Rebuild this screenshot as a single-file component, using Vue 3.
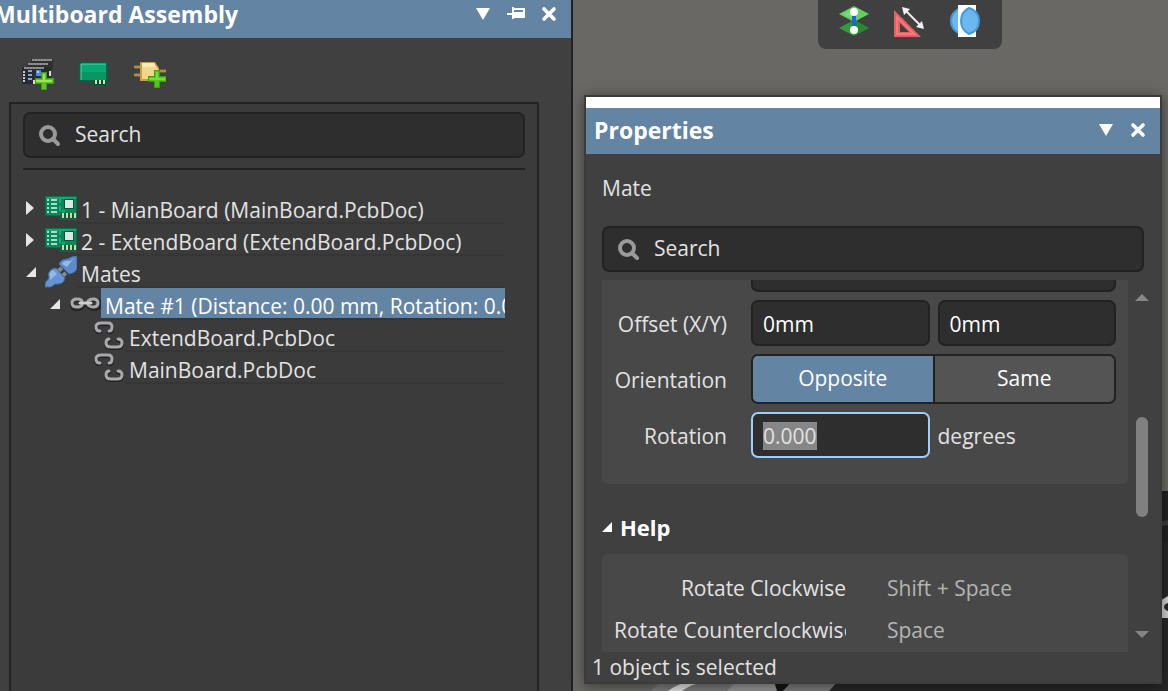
<script setup>
import { ref, onMounted } from 'vue'

const tree = [
  { id: 1, level: 0, state: 'closed', icon: 'board', label: '1 - MianBoard (MainBoard.PcbDoc)' },
  { id: 2, level: 0, state: 'closed', icon: 'board', label: '2 - ExtendBoard (ExtendBoard.PcbDoc)' },
  { id: 3, level: 0, state: 'open', icon: 'plug', label: 'Mates' },
  { id: 4, level: 1, state: 'open', icon: 'chain', label: 'Mate #1 (Distance: 0.00 mm, Rotation: 0.000)', selected: true },
  { id: 5, level: 2, state: 'leaf', icon: 'link', label: 'ExtendBoard.PcbDoc' },
  { id: 6, level: 2, state: 'leaf', icon: 'link', label: 'MainBoard.PcbDoc' }
]

const shortcuts = [
  { action: 'Rotate Clockwise', keys: 'Shift + Space' },
  { action: 'Rotate Counterclockwise', keys: 'Space' }
]

const assemblyQuery = ref('')
const propertyQuery = ref('')
const offsetX = ref('0mm')
const offsetY = ref('0mm')
const rotation = ref('0.000')
const orientation = ref('Opposite')
const rotationField = ref(null)

onMounted(() => {
  rotationField.value.focus({ preventScroll: true })
  rotationField.value.select()
})
</script>

<template>
  <div class="workspace">
    <aside class="dock">
      <header class="titlebar docked">
        <h2>Multiboard Assembly</h2>
        <button type="button" aria-label="Panel menu">
          <svg width="16" height="16" viewBox="0 0 16 16"><path d="M1 2h14L8 14z" fill="#fff" /></svg>
        </button>
        <button type="button" aria-label="Pin panel">
          <svg width="18" height="16" viewBox="0 0 18 16"><path d="M0 7h5V1h2v1h11v10H7v1H5V9H0zM7 4v2h9V4z" fill="#fff" fill-rule="evenodd" /></svg>
        </button>
        <button type="button" aria-label="Close panel">
          <svg width="16" height="16" viewBox="0 0 16 16"><path d="M3 3l10 10M13 3L3 13" stroke="#fff" stroke-width="3.6" stroke-linecap="round" /></svg>
        </button>
      </header>

      <div class="tools">
        <button type="button" aria-label="Add multiboard project">
          <svg width="32" height="32" viewBox="0 0 32 32">
            <path d="M9 1h22v11H9z" fill="#303030" />
            <path d="M5 5h22v9H5z" fill="#303030" />
            <path d="M0 9h29v17H0z" fill="#282b2f" />
            <path d="M10 2h20M6 6h20M2 10h20" stroke="#7d7d7d" stroke-width="2" />
            <path d="M10 2h20M6 6h20M2 10h20" stroke="#a5a5a5" stroke-width="1" stroke-dasharray="2 1" />
            <path d="M2 13v11" stroke="#c5ccd4" stroke-width="2" stroke-dasharray="2 1" />
            <path d="M6 13h4M6 17h4M6 21h4" stroke="#86a7d8" stroke-width="2" />
            <path d="M14 12h5v6h-5z" fill="#4b86f4" />
            <path d="M15 13h2v2h-2z" fill="#b5d0ff" />
            <path d="M28 13v5M12 22v4" stroke="#d8d8d8" stroke-width="2" />
            <path d="M19 14h6v6h7v6h-7v6h-6v-6h-6v-6h6z" fill="#3c9c12" />
            <path d="M20 15h4v6h7v4h-7v6h-4v-6h-6v-4h6z" fill="#62c22a" />
            <path d="M21 16h2v6h7v2H14v-2h7z" fill="#9be857" />
          </svg>
        </button>
        <button type="button" aria-label="Add board">
          <svg width="32" height="32" viewBox="0 0 32 32">
            <path d="M1 4h29v24H15v-4H1z" fill="#046246" />
            <path d="M3 6h25v16H3z" fill="#08a875" />
            <path d="M3 14h25v8H3z" fill="#079763" />
            <path d="M3 22V6h25" fill="none" stroke="#53d4ad" />
            <path d="M16 22h12v5H16z" fill="#064a35" />
            <path d="M17 22h2v4h-2zM21 22h2v4h-2zM25 22h2v4h-2z" fill="#d9dfa6" />
          </svg>
        </button>
        <button type="button" aria-label="Add component">
          <svg width="32" height="32" viewBox="0 0 32 32">
            <path d="M0 9h7M0 17h7M22 13h10" stroke="#9b7936" stroke-width="3" />
            <path d="M0 9h7M0 17h7M23 13h9" stroke="#c8a45c" />
            <path d="M6 4h15l4 6v13H6z" fill="#c89d48" />
            <path d="M8 5h12l4 6v10H8z" fill="#f2d68a" />
            <path d="M8 5h12l2 4H8z" fill="#f9ebb9" />
            <path d="M20 12h6v6h6v6h-6v6h-6v-6h-6v-6h6z" fill="#3c9c12" />
            <path d="M21 13h4v6h7v4h-7v6h-4v-6h-6v-4h6z" fill="#58c51d" />
            <path d="M22 14h2v6h7v2H15v-2h7z" fill="#79da3b" />
          </svg>
        </button>
      </div>

      <section class="assembly">
        <label class="search">
          <svg width="24" height="24" viewBox="0 0 24 24"><circle cx="11" cy="11" r="7" fill="none" stroke="#9a9a9a" stroke-width="4" /><path d="M16 16l5 5" stroke="#9a9a9a" stroke-width="4" stroke-linecap="round" /></svg>
          <input v-model="assemblyQuery" type="text" placeholder="Search" aria-label="Search assembly" />
        </label>
        <ul class="tree">
          <li v-for="node in tree" :key="node.id" :class="['node', 'level-' + node.level, { selected: node.selected }]">
            <span class="toggle">
              <svg v-if="node.state === 'closed'" width="16" height="32" viewBox="0 0 16 32"><path d="M3 9l8 7-8 7z" fill="#e6e6e6" /></svg>
              <svg v-else-if="node.state === 'open'" width="16" height="32" viewBox="0 0 16 32"><path d="M13 11v10H3z" fill="#e6e6e6" /></svg>
            </span>
            <svg v-if="node.icon === 'board'" width="32" height="32" viewBox="0 0 32 32">
              <path d="M0 4h32v24H15v-4H0z" fill="#04714e" />
              <path d="M1 5h30v18H1z" fill="#07895b" />
              <path d="M1 6h30" stroke="#3eb78d" />
              <path d="M2 8h2M2 12h2M2 16h2M2 20h2M6 8h6M6 12h6M6 16h6M6 20h6" stroke="#a8dcc4" stroke-width="2" />
              <path d="M15 7v4M15 14v5M17 19h3" stroke="#22a978" stroke-width="2" />
              <path d="M19 7h10v10H19z" fill="#07553d" />
              <path d="M20 8h8v8h-8z" fill="#d9e8e1" />
              <path d="M16 21h15v6H16z" fill="#065c40" />
              <path d="M17 21h2v5h-2zM21 21h2v5h-2zM25 21h2v5h-2zM29 21h2v5h-2z" fill="#d3d89c" />
            </svg>
            <svg v-else-if="node.icon === 'plug'" width="32" height="32" viewBox="0 0 32 32">
              <path d="M12 16l5-4M16 21l5-4" stroke="#8a8a8a" stroke-width="4" />
              <path d="M0 31V27L4 22Q2 16 7 13L11 12 20 22Q19 29 10 28L6 31Z" fill="#6494d2" stroke="#3b69a7" />
              <path d="M5 21Q3 17 8 14l4 4-7 6z" fill="#94b9e8" />
              <path d="M32 0v12Q31 17 24 18L14 8Q16 3 22 3L29 0z" fill="#5c8ccc" stroke="#3b69a7" />
              <path d="M17 8Q19 4 25 5l4-3-7 9z" fill="#94b9e8" />
            </svg>
            <svg v-else-if="node.icon === 'chain'" width="32" height="32" viewBox="0 0 32 32">
              <g fill="none" stroke-linecap="round">
                <path d="M13 18Q12 20 8 20Q3 20 3 16T8 11Q12 11 14 13M20 13Q22 11 26 11Q31 11 31 15T26 20Q22 20 20 18M11 16h12" stroke="#252525" stroke-width="4" transform="translate(0 1)" />
                <path d="M13 17Q12 19 8 19Q3 19 3 15T8 11Q12 11 13 13M19 13Q21 11 24 11Q29 11 29 15T24 19Q21 19 19 17" stroke="#aaa" stroke-width="3" />
                <path d="M11 15h11" stroke="#d0d0d0" stroke-width="3" />
              </g>
            </svg>
            <svg v-else width="32" height="32" viewBox="0 0 32 32">
              <g fill="none" stroke-linecap="round">
                <path d="M7 11Q3 11 3 7T8 3h7Q19 3 19 7T16 11M16 19Q13 19 13 23T18 27h6Q29 27 29 23T25 19" stroke="#222" stroke-width="4" transform="translate(0 1)" />
                <path d="M7 11Q3 11 3 7T8 3h7Q19 3 19 7T16 11M16 19Q13 19 13 23T18 27h6Q29 27 29 23T25 19" stroke="#a9a9ad" stroke-width="3" />
              </g>
            </svg>
            <span class="name">{{ node.label }}</span>
          </li>
        </ul>
      </section>
    </aside>

    <main class="canvas">
      <svg class="scene" width="595" height="210" viewBox="0 0 595 210" aria-hidden="true">
        <path d="M78 210l13-12h180l-11 12z" fill="#797979" />
        <path d="M95 210Q112 197 145 197L131 201Q118 203 109 210z" fill="#dedede" />
        <path d="M154 210l12-13h47l-9 13z" fill="#929292" />
        <path d="M201 200h18l-9 10h-6z" fill="#16150f" />
        <path d="M256 210l12-13h310V10h17v200z" fill="#272727" />
        <path d="M585 10h10v50h-10z" fill="#202020" />
        <path d="M585 41l10-2v5l-10 2z" fill="#3b3b3b" />
        <path d="M585 121l10-6v22h-10z" fill="#cfcfcf" />
        <ellipse cx="596" cy="126" rx="5" ry="4" fill="#282828" />
      </svg>

      <nav class="floatbar" aria-label="Mate tools">
        <button type="button" aria-label="Create mate">
          <svg width="32" height="32" viewBox="0 0 32 32">
            <path d="M1 23l15-8 15 8-15 8z" fill="#329a37" />
            <path d="M16 15l15 8-15 8z" fill="#248a2b" />
            <path d="M1 9l15-8 15 8-15 8z" fill="#63cf60" />
            <path d="M5 9l11-6v12z" fill="#79da75" />
            <path d="M16 7v18" stroke="#1c66d5" stroke-width="4" />
            <circle cx="16" cy="7" r="4" fill="#fff" /><circle cx="16" cy="25" r="4" fill="#fff" />
          </svg>
        </button>
        <button type="button" aria-label="Measure">
          <svg width="32" height="32" viewBox="0 0 32 32">
            <path d="M0 5v27h27zM6 18v9h9z" fill="#e06264" fill-rule="evenodd" />
            <path d="M3 12v17h17z" fill="none" stroke="#f87777" stroke-width="2" />
            <path d="M11 5l16 16" stroke="#ececec" stroke-width="2" />
            <path d="M8 2l8 2-6 6zM30 24l-8-2 6-6z" fill="#f2f2f2" />
          </svg>
        </button>
        <button type="button" aria-label="Section view">
          <svg width="32" height="33" viewBox="0 0 32 33">
            <circle cx="14" cy="17" r="13" fill="#6bb7f0" stroke="#4798d4" stroke-width="2" />
            <path d="M8 1h18v32H8z" fill="#fff" />
            <path d="M19 4Q29 7 29 17T19 30Q11 26 11 17T19 4z" fill="#6bb7f0" stroke="#4798d4" stroke-width="2" />
          </svg>
        </button>
      </nav>

      <section class="properties">
        <div class="strip"></div>
        <header class="titlebar">
          <h2>Properties</h2>
          <button type="button" aria-label="Properties menu">
            <svg width="16" height="16" viewBox="0 0 16 16"><path d="M1 2h14L8 14z" fill="#fff" /></svg>
          </button>
          <button type="button" aria-label="Close properties">
            <svg width="16" height="16" viewBox="0 0 16 16"><path d="M3 3l10 10M13 3L3 13" stroke="#fff" stroke-width="3.6" stroke-linecap="round" /></svg>
          </button>
        </header>
        <h3 class="subject">Mate</h3>
        <label class="search">
          <svg width="24" height="24" viewBox="0 0 24 24"><circle cx="11" cy="11" r="7" fill="none" stroke="#9a9a9a" stroke-width="4" /><path d="M16 16l5 5" stroke="#9a9a9a" stroke-width="4" stroke-linecap="round" /></svg>
          <input v-model="propertyQuery" type="text" placeholder="Search" aria-label="Search properties" />
        </label>

        <div class="scroller">
          <div class="content">
            <div class="group form">
              <div class="cut"></div>
              <label for="offset-x">Offset (X/Y)</label>
              <div class="pair">
                <input id="offset-x" v-model="offsetX" type="text" />
                <input v-model="offsetY" type="text" aria-label="Offset Y" />
              </div>
              <span id="orientation-label" class="caption">Orientation</span>
              <div class="segments" role="group" aria-labelledby="orientation-label">
                <button
                  v-for="side in ['Opposite', 'Same']"
                  :key="side"
                  type="button"
                  :class="{ active: orientation === side }"
                  :aria-pressed="orientation === side"
                  @click="orientation = side"
                >{{ side }}</button>
              </div>
              <label for="rotation">Rotation</label>
              <div class="pair">
                <input id="rotation" ref="rotationField" v-model="rotation" type="text" />
                <span class="unit">degrees</span>
              </div>
            </div>

            <h3 class="heading">
              <svg width="12" height="12" viewBox="0 0 12 12"><path d="M10 1v10H0z" fill="#fff" /></svg>
              Help
            </h3>
            <dl class="group help">
              <template v-for="item in shortcuts" :key="item.action">
                <dt>{{ item.action }}</dt>
                <dd>{{ item.keys }}</dd>
              </template>
            </dl>
          </div>
          <div class="scrollbar" aria-hidden="true">
            <svg width="14" height="8" viewBox="0 0 14 8"><path d="M7 0l7 7H0z" fill="#868686" /></svg>
            <span class="thumb"></span>
            <svg width="14" height="8" viewBox="0 0 14 8"><path d="M0 0h14L7 7z" fill="#868686" /></svg>
          </div>
        </div>
        <footer class="status">1 object is selected</footer>
      </section>
    </main>
  </div>
</template>

<style>
html,
body {
  overflow: hidden;
  background: #6a6865;
}
</style>

<style scoped>
.workspace {
  display: flex;
  height: 100vh;
  overflow: hidden;
  color: #e2e2e2;
  font-family: "Open Sans", "Noto Sans", sans-serif;
  font-size: 21px;
  line-height: 30px;
}

.workspace *,
.workspace *::before {
  box-sizing: border-box;
}

h2,
h3,
ul,
dl,
dd {
  margin: 0;
  padding: 0;
}

svg {
  display: block;
  flex: none;
}

button,
input {
  font: inherit;
  color: inherit;
}

button {
  padding: 0;
  border: 0;
  background: none;
}

.dock {
  display: flex;
  flex: 0 0 573px;
  flex-direction: column;
  min-width: 0;
  border-right: 2px solid #222;
  background: #404040;
}

.titlebar {
  display: flex;
  flex: none;
  align-items: center;
  gap: 16px;
  height: 46px;
  padding: 0 14px 2px 8px;
  background: #6484a4;
  color: #fff;
}

.titlebar h2 {
  flex: 1;
  font-size: 23px;
  font-weight: 700;
  white-space: nowrap;
}

.docked {
  height: 38px;
  padding: 0 14px 10px 0;
}

.docked h2 {
  margin-left: -6px;
}

.tools {
  display: flex;
  gap: 24px;
  padding: 20px 22px 12px;
}

.assembly {
  flex: 1;
  min-width: 0;
  margin: 0 32px 0 9px;
  padding: 8px 12px 0;
  border: 2px solid #222;
  border-bottom: 0;
  background: #3b3b3b;
}

.search {
  display: flex;
  align-items: center;
  gap: 14px;
  height: 46px;
  padding: 0 12px;
  border: 2px solid #222;
  border-radius: 7px;
  background: #2e2e2e;
}

.search input {
  flex: 1;
  min-width: 0;
  height: 30px;
  padding: 0 0 2px;
  border: 0;
  outline: 0;
  background: none;
}

.search input::placeholder {
  color: #e2e2e2;
  opacity: 1;
}

.tree {
  margin-top: 10px;
  padding: 22px 20px 0 0;
  border-top: 2px solid #222;
  list-style: none;
}

.node {
  display: flex;
  height: 32px;
}

.toggle {
  flex: 0 0 22px;
}

.level-1 {
  padding-left: 24px;
}

.level-2 {
  padding-left: 48px;
}

.name {
  flex: 1;
  min-width: 0;
  padding: 3px 0 0 4px;
  border-bottom: 2px solid #363636;
  overflow: hidden;
  white-space: nowrap;
}

.selected .name {
  background: #6484a4;
  color: #fff;
}

.canvas {
  position: relative;
  display: flex;
  flex: 1;
  flex-direction: column;
  min-width: 0;
  padding: 0 6px 7px 11px;
  background: #6a6865;
}

.scene {
  position: absolute;
  right: 0;
  bottom: 0;
}

.floatbar {
  display: flex;
  flex: none;
  align-self: flex-end;
  gap: 24px;
  height: 49px;
  margin: 0 160px 46px 0;
  padding: 4px 20px 12px;
  border-radius: 0 0 8px 8px;
  background: #404040;
}

.properties {
  position: relative;
  display: flex;
  flex: 1;
  flex-direction: column;
  min-height: 0;
  border: 2px solid #3c3c3c;
  background: #404040;
  box-shadow: 0 2px 12px rgba(0, 0, 0, 0.45);
}

.strip {
  flex: 0 0 11px;
  background: #fff;
}

.subject {
  margin: 19px 16px 23px;
  font-size: 21px;
  font-weight: 400;
}

.properties > .search {
  flex: none;
  margin: 0 16px 8px;
}

.scroller {
  display: flex;
  flex: 1;
  min-height: 0;
  padding: 0 11px 0 16px;
}

.content {
  flex: 1;
  min-width: 0;
  overflow: hidden;
}

.group {
  border-radius: 6px;
  background: #484848;
}

.form {
  display: grid;
  grid-template-columns: 113px 1fr;
  gap: 8px 24px;
  align-items: center;
  padding: 0 12px 26px;
  border-radius: 0 0 6px 6px;
}

.form label,
.caption {
  padding-top: 2px;
  text-align: right;
  white-space: nowrap;
}

.cut {
  grid-column: 2;
  height: 12px;
  border: 2px solid #222;
  border-top: 0;
  border-radius: 0 0 7px 7px;
  background: #2e2e2e;
}

.pair {
  display: grid;
  grid-template-columns: 1fr 1fr;
  gap: 8px;
  align-items: center;
}

.pair input {
  width: 100%;
  min-width: 0;
  height: 46px;
  padding: 2px 10px 0;
  border: 2px solid #222;
  border-radius: 7px;
  outline: 0;
  background: #2e2e2e;
  color: #fff;
}

.pair input:focus {
  border-color: #a0cdfb;
}

.pair input::selection {
  background: #868686;
  color: #e2e2e2;
}

.unit {
  padding-top: 2px;
}

.segments {
  display: flex;
  height: 50px;
  border: 2px solid #222;
  border-radius: 7px;
  background: #545454;
  overflow: hidden;
}

.segments button {
  flex: 1;
  padding-bottom: 2px;
  color: #fff;
}

.segments button + button {
  border-left: 2px solid #222;
}

.segments .active {
  background: #6484a4;
}

.heading {
  display: flex;
  align-items: center;
  gap: 6px;
  height: 70px;
  padding-top: 16px;
  color: #fff;
  font-size: 22px;
  font-weight: 700;
}

.help {
  display: grid;
  grid-template-columns: 232px 1fr;
  gap: 12px 41px;
  padding: 19px 12px;
}

.help dt {
  display: flex;
  overflow: hidden;
  white-space: nowrap;
}

.help dt::before {
  content: "";
  flex: 1;
}

.help dd {
  color: #b4b4b4;
}

.scrollbar {
  display: flex;
  flex: 0 0 14px;
  flex-direction: column;
  align-items: center;
  margin-left: 7px;
  padding: 14px 0 13px;
}

.thumb {
  width: 12px;
  height: 100px;
  margin: 115px 0 auto;
  border-radius: 6px;
  background: #808080;
}

.status {
  flex: none;
  height: 30px;
  padding: 1px 0 0 6px;
  line-height: 29px;
}
</style>
